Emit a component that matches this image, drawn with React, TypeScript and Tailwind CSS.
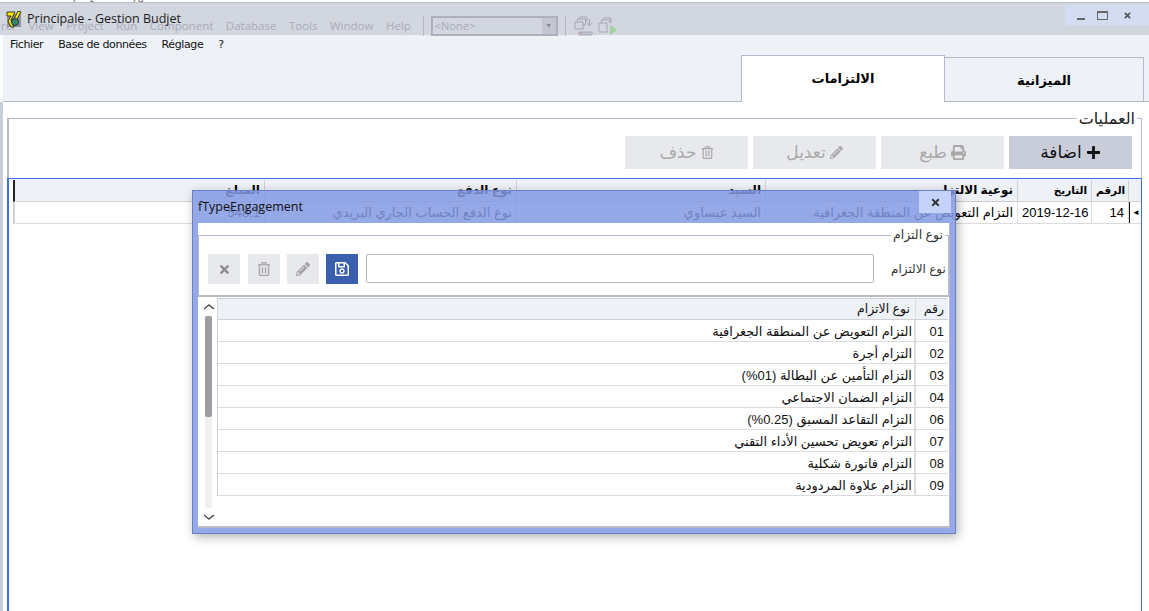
import { FaPlus, FaPrint, FaPencilAlt, FaRegTrashAlt, FaRegSave, FaTimes } from "react-icons/fa";

const ar = "font-['Liberation_Sans','DejaVu_Sans',sans-serif]";

const ghost = ["View", "Project", "Run", "Component", "Database", "Tools", "Window", "Help"];

const rows = [
  ["01", "التزام التعويض عن المنطقة الجغرافية"],
  ["02", "التزام أجرة"],
  ["03", "التزام التأمين عن البطالة (01%)"],
  ["04", "التزام الضمان الاجتماعي"],
  ["06", "التزام التقاعد المسبق (0.25%)"],
  ["07", "التزام تعويض تحسين الأداء التقني"],
  ["08", "التزام فاتورة شكلية"],
  ["09", "التزام علاوة المردودية"],
];

const mainCols = [
  { w: "w-[250px]", hs: "text-[12px]", h: "المبلغ", v: "548.1" },
  { w: "w-[252px]", hs: "text-[12px]", h: "نوع الدفع", v: "نوع الدفع الحساب الجاري البريدي" },
  { w: "w-[249px]", hs: "text-[12px]", h: "السيد", v: "السيد عبساوي" },
  { w: "w-[252px]", hs: "text-[12px]", h: "نوعية الالتزام", v: "التزام التعويض عن المنطقة الجغرافية" },
  { w: "w-[74px]", hs: "text-[10.5px]", h: "التاريخ", v: "2019-12-16" },
  { w: "w-[37px]", hs: "text-[10.5px]", h: "الرقم", v: "14" },
];

function ActionButton({ label, icon, active }: { label: string; icon: React.ReactNode; active?: boolean }) {
  return (
    <div
      className={`w-[123px] h-[33px] flex items-center justify-center gap-1 text-[17px] ${
        active ? "bg-[#c9cdd9] text-[#111]" : "bg-[#e8e9ec] text-[#a9a9a9]"
      }`}
    >
      <span>{label}</span>
      {icon}
    </div>
  );
}

function Logo() {
  return (
    <svg width="16" height="17" viewBox="0 0 16 17" className="shrink-0">
      <rect x="1" y="3" width="14" height="13" fill="#8f929c" />
      <path d="M1 1h8L5 9l3 7H5L2 10l3-5H1z" fill="#f5e800" stroke="#111" strokeWidth="0.8" />
      <path d="M12 0l3 1-5 9-2-2z" fill="#f5e800" stroke="#111" strokeWidth="0.8" />
      <circle cx="9" cy="11" r="3.5" fill="#2f8f4e" stroke="#123" strokeWidth="0.8" />
      <circle cx="8.5" cy="10.5" r="1.2" fill="#3a66c8" />
    </svg>
  );
}

function GhostTools() {
  return (
    <span className="-ml-[5px] flex gap-[4px] items-center">
      <svg width="20" height="20" viewBox="0 0 20 20" fill="none" stroke="#a6a9b5">
        <path d="M1 6h8v7H1zM3.500 6V3h8v6H9M6 3V1h7v5" />
        <path d="M15.500 3v6M13 7l2.500 3L18 7" />
        <path d="M5 16h13v3H5z" fill="#bfc2cc" />
        <path d="M6 17h2" stroke="#e58a9a" />
      </svg>
      <svg width="20" height="20" viewBox="0 0 20 20" fill="none" stroke="#a6a9b5">
        <path d="M1 7h8v9H1zM3.500 7V4h8v3M6 4V2h7v5" />
        <path d="M12 9l7 5-7 5z" fill="#9fd29f" stroke="none" />
      </svg>
    </span>
  );
}

export default function App() {
  return (
    <div className={`relative w-[1149px] h-[611px] overflow-hidden bg-white flex flex-col text-black ${ar}`}>
      {/* strip of the window behind */}
      <div className="h-[2px] overflow-hidden text-[12px] leading-none text-[#777] font-['Open_Sans',sans-serif] shrink-0">
        <div className="-mt-[10px] pl-1">Gestion Budjet [Running]</div>
      </div>

      {/* title bar */}
      <div className="relative h-[33px] shrink-0 bg-[#d2d6df] border-t border-[#b8bccb] flex items-end text-[#a9acb8] text-[11.5px] font-['Open_Sans',sans-serif]">
        <div className="flex items-center h-[20px] mb-[-1px] pl-[1px] gap-[12.500px]">
          <span className="w-[15px] overflow-hidden">rch</span>
          {ghost.map((g) => (
            <span key={g}>{g}</span>
          ))}
          <span className="w-px h-[20px] bg-[#b5b8c4]" />
          <div className="-ml-[6px] w-[127px] h-[20px] border-2 border-[#aeb1bc] flex items-center justify-between pl-[2px] text-[11px]">
            <span>&lt;None&gt;</span>
            <span className="w-[14px] h-[16px] bg-[#c3c6d0] flex items-center justify-center text-[7px] text-[#888]">▼</span>
          </div>
          <span className="-ml-[5px] w-px h-[20px] bg-[#b5b8c4]" />
          <GhostTools />
        </div>

        <div className="absolute left-[6px] top-[7px] flex items-center gap-[5px] text-[#1c1c1c] text-[12.5px]">
          <Logo />
          <span>Principale - Gestion Budjet</span>
        </div>

        <div className="absolute right-0 top-[2px] w-[84px] h-[20px] bg-[#d4dcf2] flex items-center text-[#555]">
          <span className="ml-[12px] mt-[8px] w-[8px] h-[1.500px] bg-[#666]" />
          <span className="ml-[12px] w-[11px] h-[9px] border border-[#666] border-t-2" />
          <FaTimes className="ml-[15px] w-[9px] h-[9px]" />
        </div>
      </div>

      {/* menu + tabs */}
      <div className="ml-[3px] h-[67px] shrink-0 bg-[#eef1f6] border-b border-[#b4bacb] flex flex-col justify-between">
        <div className="flex h-[20px] mt-[1px] items-center pl-[7px] gap-[15px] text-[11px] font-['DejaVu_Sans',sans-serif] tracking-[-0.4px] text-[#111]">
          <span>Fichier</span>
          <span>Base de données</span>
          <span>Réglage</span>
          <span>?</span>
        </div>
        <div className="flex justify-end items-end pr-[5px] -mb-px font-bold text-[13px]">
          <div className="w-[204px] h-[47px] bg-white border border-b-0 border-[#b4bacb] flex justify-center pt-[13px]">الالتزامات</div>
          <div className="w-[199px] h-[45px] bg-[#eef1f6] border border-l-0 border-[#b4bacb] flex justify-center pt-[13px]">الميزانية</div>
        </div>
      </div>

      {/* content */}
      <div className="flex-1 flex">
        <div className="w-[3px] bg-[#c9cddb]" />
        <div className="w-[4px]" />
        <div className="relative w-[1135px] mt-[16px] flex flex-col">
          {/* group box */}
          <div className="h-[60px] border-t border-l-2 border-r border-[#b4bacb] flex justify-end items-start pt-[17px] pr-[9px] gap-[5px]">
            <ActionButton label="حذف" icon={<FaRegTrashAlt className="w-[13px] h-[13px]" />} />
            <ActionButton label="تعديل" icon={<FaPencilAlt className="w-[13px] h-[13px]" />} />
            <ActionButton label="طبع" icon={<FaPrint className="w-[15px] h-[15px]" />} />
            <ActionButton label="اضافة" icon={<FaPlus className="w-[15px] h-[15px]" />} active />
          </div>
          <span className="absolute right-[5px] -top-[8px] bg-white px-[2px] text-[16px] leading-[17px] text-[#222]">العمليات</span>

          {/* grid */}
          <div className="flex-1 border-t border-l-2 border-r border-[#3f6fe0] pl-[4px] pt-[1px] text-[13px]">
            <div className="flex h-[22px] bg-[#eef1f6] border-b border-[#cfcfd4] font-bold border-l-2 border-l-[#222]">
              {mainCols.map((c) => (
                <div key={c.h} className={`${c.w} ${c.hs} shrink-0 border-r border-[#cfcfd4] px-[4px] text-right overflow-hidden whitespace-nowrap leading-[20px]`}>
                  {c.h}
                </div>
              ))}
              <div className="flex-1" />
            </div>
            <div className="flex h-[22px] border-b border-[#dcdcdf] border-l-2 border-l-[#cfcfd4]">
              {mainCols.map((c) => (
                <div key={c.h} className={`${c.w} shrink-0 border-r border-[#dcdcdf] px-[4px] text-right overflow-hidden whitespace-nowrap leading-[22px]`}>
                  {c.v}
                </div>
              ))}
              <div className="flex-1 border-l border-[#111] flex items-center pl-[2px] text-[8px]">◄</div>
            </div>
          </div>
        </div>
      </div>

      {/* dialog */}
      <div className="absolute left-[192px] top-[190px] w-[764px] h-[344px] flex flex-col bg-[#8299e3]/85 border border-[#6d80c6] shadow-[2px_3px_10px_rgba(0,0,0,0.3)] px-[5px] pb-[5px]">
        <div className="h-[32px] shrink-0 relative text-[12.5px] font-['Open_Sans',sans-serif] text-[#111] leading-[32px]">
          fTypeEngagement
          <div className="absolute -right-[1px] top-0 w-[32px] h-[22px] bg-[#c5d2fa] flex items-center justify-center">
            <FaTimes className="w-[11px] h-[11px] text-[#333]" />
          </div>
        </div>
        <div className="flex-1 bg-white flex flex-col border-b-2 border-r border-[#b9bcc6] relative">
          <div className="h-[60px] mt-[12px] shrink-0 border-t border-x border-[#b4bacb] flex items-start pt-[18px] pl-[9px] gap-[8px] text-[12px]">
            <div className="w-[32px] h-[30px] bg-[#e8e9ec] flex items-center justify-center text-[#8d8d8d]">
              <FaTimes className="w-[13px] h-[13px]" />
            </div>
            <div className="w-[32px] h-[30px] bg-[#e8e9ec] flex items-center justify-center text-[#a5a5a5]">
              <FaRegTrashAlt className="w-[14px] h-[14px]" />
            </div>
            <div className="w-[32px] h-[30px] -ml-[1px] bg-[#e8e9ec] flex items-center justify-center text-[#a5a5a5]">
              <FaPencilAlt className="w-[14px] h-[14px]" />
            </div>
            <div className="w-[32px] h-[30px] -ml-[1px] bg-[#3a5fae] flex items-center justify-center text-white">
              <FaRegSave className="w-[16px] h-[16px]" />
            </div>
            <div className="w-[508px] h-[29px] border border-[#b4b7c2] rounded-[2px] bg-white" />
            <span className="ml-[9px] whitespace-nowrap text-[#333] leading-[30px]">نوع الالتزام</span>
          </div>
          <span className="absolute right-[4px] top-[5px] bg-white px-[2px] text-[12.5px] leading-[15px] text-[#333]">نوع التزام</span>

          <div className="h-[2px] bg-[#b9bcc6] shrink-0" />

          <div className="flex-1 flex pl-[4px] pt-[1px] text-[13px] text-[#111]">
            <div className="w-[13px] flex flex-col items-center text-[#555]">
              <svg width="12" height="8" viewBox="0 0 12 8" className="mt-[5px] mb-[5px]">
                <path d="M1 6l5-4 5 4" fill="none" stroke="#555" strokeWidth="1.600" />
              </svg>
              <div className="w-[7px] h-[192px] bg-[#f0f0f0] rounded-[2px]">
                <div className="w-full h-[101px] bg-[#9d9ea2] rounded-[2px]" />
              </div>
              <svg width="12" height="8" viewBox="0 0 12 8" className="mt-[5px]">
                <path d="M1 2l5 4 5-4" fill="none" stroke="#555" strokeWidth="1.600" />
              </svg>
            </div>
            <div className="ml-[2px] w-[731px] border-l border-[#d4d4d8] self-start">
              <div className="flex h-[22px] bg-[#eef1f6] border-t border-b border-[#d0d0d6] text-[12.5px] leading-[21px]">
                <div className="flex-1 text-right pr-[5px] border-r border-[#dcdcdf]">نوع الاتزام</div>
                <div className="w-[32px] text-right pr-[4px]">رقم</div>
              </div>
              {rows.map(([n, t]) => (
                <div key={n} className="flex h-[22px] border-b border-[#dcdcdf] leading-[23px]">
                  <div className="flex-1 text-right pr-[2px] border-r-2 border-[#dcdcdf] whitespace-nowrap">{t}</div>
                  <div className="w-[32px] text-right pr-[4px] bg-white">{n}</div>
                </div>
              ))}
            </div>
          </div>
        </div>
      </div>
    </div>
  );
}
